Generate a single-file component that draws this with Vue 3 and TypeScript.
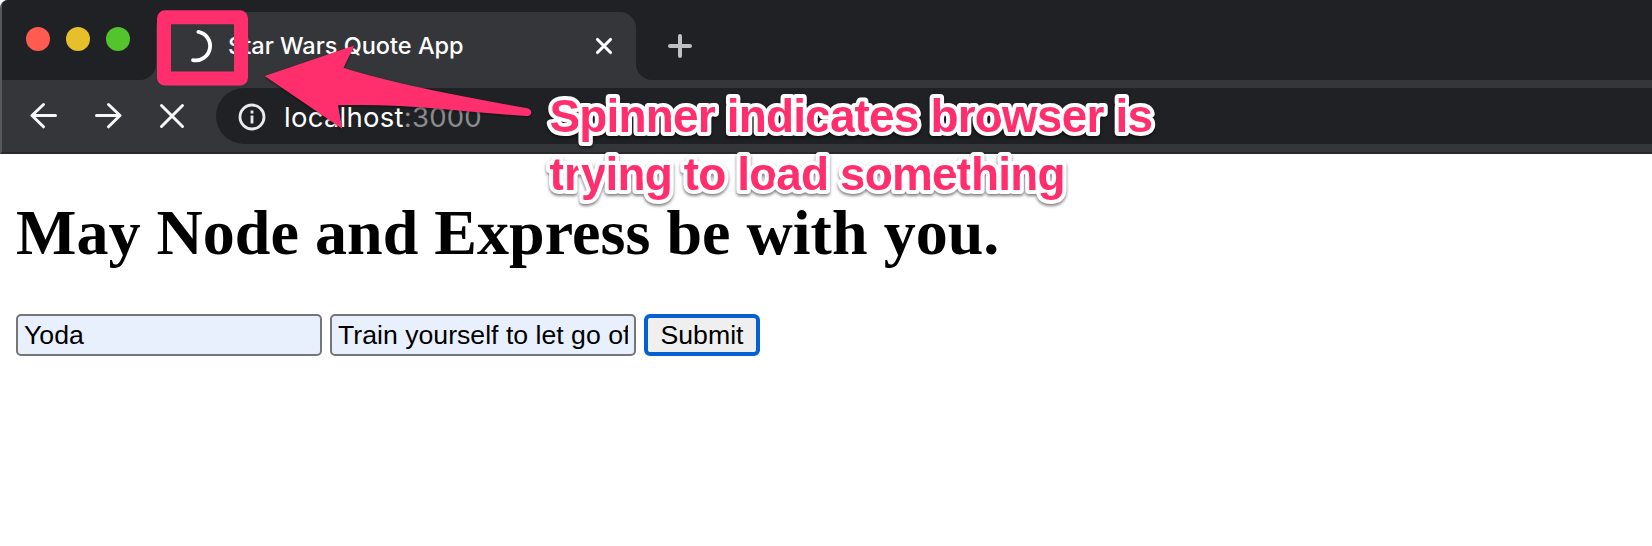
<script setup lang="ts">
import { ref } from 'vue'

const tabTitle = 'Star Wars Quote App'
const name = ref('Yoda')
const quote = ref('Train yourself to let go of everything you fear to lose.')
const noteLines = [
  { text: 'Spinner indicates browser is', x: 549.5, y: 132.3, width: 603.5 },
  { text: 'trying to load something', x: 549.5, y: 190.3, width: 516 },
]
</script>

<template>
  <div class="window">
    <header class="chrome">
      <div class="tab-strip">
        <div class="lights">
          <i class="light close"></i>
          <i class="light minimize"></i>
          <i class="light expand"></i>
        </div>
        <div class="tab-well">
          <div class="tab">
            <svg class="spinner" width="36" height="36" viewBox="0 0 36 36">
              <path d="M20.4 3.8A14.3 14.3 0 0 1 15 32.1" />
            </svg>
            <span class="tab-title">{{ tabTitle }}</span>
            <svg class="tab-close" width="20" height="20" viewBox="0 0 20 20">
              <path d="M3.5 3.5 16.5 16.5M16.5 3.5 3.5 16.5" />
            </svg>
          </div>
        </div>
        <div class="strip-rest">
          <svg width="26" height="26" viewBox="0 0 26 26">
            <path d="M13 3V23M3 13H23" />
          </svg>
        </div>
      </div>
      <div class="toolbar">
        <nav class="nav">
          <svg width="32" height="32" viewBox="0 0 32 32">
            <path d="M27.5 15.5H4M15.5 4.5 4 15.5 15.5 26.8" />
          </svg>
          <svg width="32" height="32" viewBox="0 0 32 32">
            <path d="M4.5 15.5H28M16.5 4.5 28 15.5 16.5 26.8" />
          </svg>
          <svg width="32" height="32" viewBox="0 0 32 32">
            <path d="M5.5 5.5 26.5 26.5M26.5 5.5 5.5 26.5" />
          </svg>
        </nav>
        <div class="address">
          <svg width="28" height="28" viewBox="0 0 28 28">
            <circle cx="14" cy="14" r="12" />
            <path d="M14 12.5V20.5M14 7.5V10.4" />
          </svg>
          <span class="url">localhost<span class="port">:3000</span></span>
        </div>
      </div>
    </header>

    <main class="page">
      <h1>May Node and Express be with you.</h1>
      <form @submit.prevent>
        <input v-model="name" type="text" />
        <input v-model="quote" type="text" />
        <button type="submit">Submit</button>
      </form>
    </main>

    <svg class="notes" width="1652" height="546" viewBox="0 0 1652 546">
      <rect class="frame" x="164" y="17.3" width="77" height="61.2" rx="1" />
      <path
        class="arrow"
        d="M264.7 76 354.2 45.6 343.5 67.7C390 83 460 96 527.5 108.3C532.8 109.5 532.5 116.5 526.5 116C470 112.5 405 103 338 105.3L342.2 128.8Z"
      />
      <g class="note">
        <text
          v-for="line in noteLines"
          :key="line.text"
          :x="line.x"
          :y="line.y"
          :textLength="line.width"
        >{{ line.text }}</text>
      </g>
    </svg>
  </div>
</template>

<style>
body {
  margin: 0;
  overflow: hidden;
  background: #fff;
}
</style>

<style scoped>
.window {
  position: relative;
  width: 1652px;
  height: 546px;
  overflow: hidden;
  background: #fff;
}
svg {
  display: block;
  flex: none;
  fill: none;
  stroke-linecap: round;
  stroke-linejoin: round;
}
.chrome {
  box-sizing: border-box;
  height: 154px;
  border-left: 2px solid #57585b;
  border-bottom: 2px solid #28292c;
  border-top-left-radius: 8px;
  background: #35363a;
}
.tab-strip {
  display: flex;
  height: 80px;
}
.lights {
  box-sizing: border-box;
  display: flex;
  gap: 16px;
  width: 154px;
  padding: 27px 0 0 24px;
  border-top-left-radius: 6px;
  border-bottom-right-radius: 16px;
  background: #202124;
}
.light {
  width: 24px;
  height: 24px;
  border-radius: 50%;
}
.close { background: #ff5b50; }
.minimize { background: #e6bf2b; }
.expand { background: #53c42c; }
.tab-well {
  box-sizing: border-box;
  width: 480px;
  padding-top: 12px;
  background: linear-gradient(#202124 40px, #35363a 40px);
}
.tab {
  box-sizing: border-box;
  display: flex;
  align-items: center;
  height: 68px;
  padding: 0 22px;
  border-radius: 16px 16px 0 0;
  background: #35363a;
}
.spinner {
  stroke: #fff;
  stroke-width: 3.8;
}
.tab-title {
  flex: 1;
  margin-left: 14px;
  color: #fff;
  font: 500 23.5px/30px Inter, sans-serif;
  letter-spacing: 0;
  white-space: nowrap;
}
.tab-close {
  stroke: #fff;
  stroke-width: 3.1;
}
.strip-rest {
  box-sizing: border-box;
  flex: 1;
  padding: 33px 0 0 31px;
  border-bottom-left-radius: 16px;
  background: #202124;
}
.strip-rest svg {
  stroke: #bdc1c5;
  stroke-width: 4;
}
.toolbar {
  box-sizing: border-box;
  display: flex;
  height: 72px;
  padding: 8px 0;
}
.nav {
  box-sizing: border-box;
  display: flex;
  gap: 32px;
  width: 214px;
  padding: 12px 0 0 26px;
}
.nav svg {
  stroke: #f7f7f7;
  stroke-width: 3;
}
.address {
  flex: 1;
  display: flex;
  align-items: center;
  gap: 18px;
  height: 56px;
  padding-left: 22px;
  border-radius: 28px 0 0 28px;
  background: #202124;
}
.address svg {
  position: relative;
  top: 0.5px;
  stroke: #e8eaed;
  stroke-width: 2.8;
  stroke-linecap: butt;
}
.url {
  padding-top: 2px;
  color: #fff;
  font: 400 27.5px/32px Inter, sans-serif;
  letter-spacing: 0.25px;
}
.port { color: #8b8c8e; }
.page {
  padding: 0 16px;
}
h1 {
  margin: 0;
  padding-top: 42px;
  color: #000;
  font: 700 64px/74px "Liberation Serif", serif;
  letter-spacing: 0.04px;
  white-space: nowrap;
}
form {
  display: flex;
  gap: 8px;
  margin-top: 44px;
}
input {
  box-sizing: border-box;
  width: 306px;
  height: 42px;
  padding: 0 6px;
  border: 2px solid #767676;
  border-radius: 5px;
  outline: none;
  background: #e8f0fe;
  color: #000;
  font: 26.67px "Liberation Sans", sans-serif;
}
button {
  box-sizing: border-box;
  width: 116px;
  height: 42px;
  padding: 0;
  border: 4px solid #0560d2;
  border-radius: 6px;
  background: #efefef;
  color: #000;
  font: 26.67px "Liberation Sans", sans-serif;
}
.notes {
  position: absolute;
  inset: 0;
  pointer-events: none;
}
.frame {
  stroke: #ff2f6d;
  stroke-width: 14;
}
.arrow {
  fill: #ff2f6d;
  filter: drop-shadow(0 1px 1px rgb(0 0 0 / 45%));
}
.note {
  fill: #ff2f6d;
  stroke: #fff;
  stroke-width: 8px;
  paint-order: stroke fill;
  font: 700 46px "Liberation Sans", sans-serif;
  filter: drop-shadow(0 2px 1.5px rgb(0 0 0 / 50%));
}
</style>
